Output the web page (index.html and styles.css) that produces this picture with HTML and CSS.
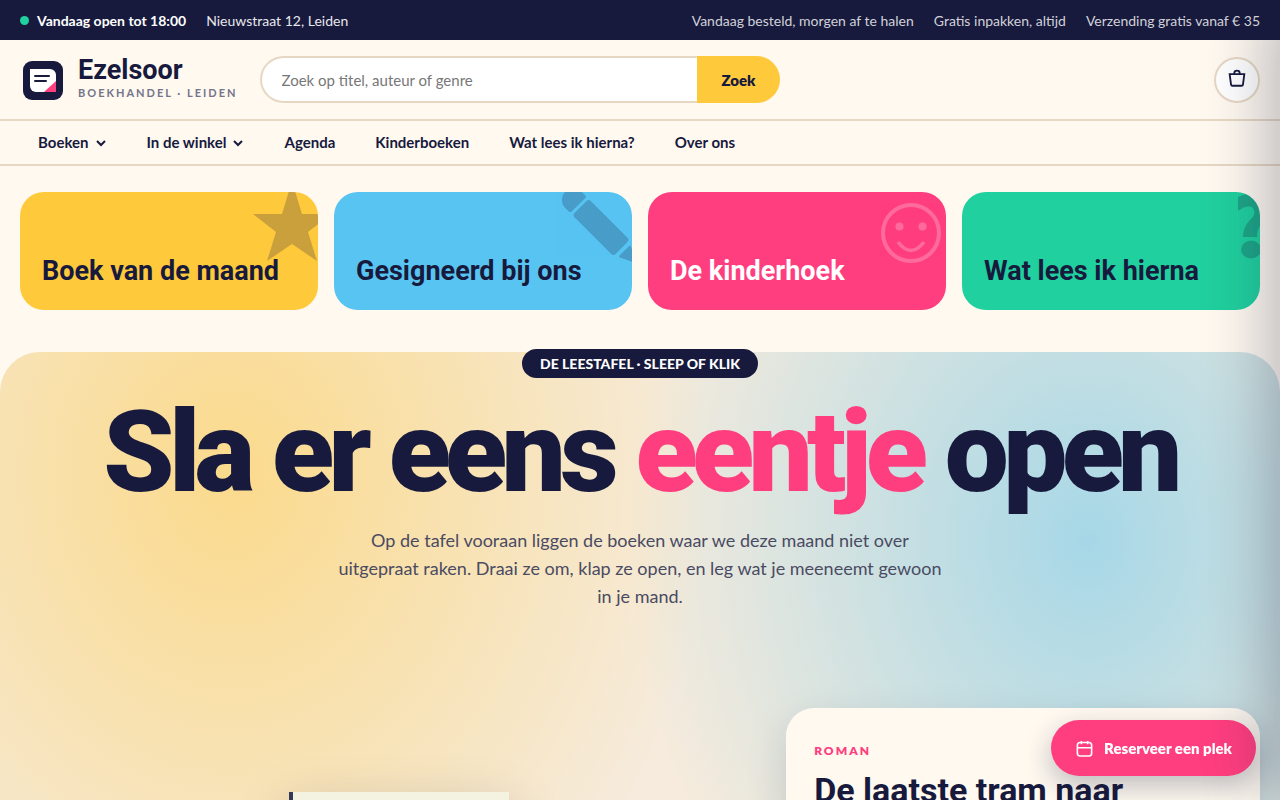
FILE: index.html
```
<!DOCTYPE html>
<html lang="nl">
<head>
<meta charset="UTF-8" />
<meta name="viewport" content="width=device-width, initial-scale=1" />
<title>Ezelsoor – Boekhandel in Leiden</title>
<link rel="stylesheet" href="styles.css">
</head>
<body>
  <div class="topbar">
    <div class="topbar-group">
      <strong class="open-now"><span class="dot"></span>Vandaag open tot 18:00</strong>
      <span>Nieuwstraat 12, Leiden</span>
    </div>
    <div class="topbar-group usps">
      <span>Vandaag besteld, morgen af te halen</span>
      <span>Gratis inpakken, altijd</span>
      <span>Verzending gratis vanaf € 35</span>
    </div>
  </div>

  <header class="header">
    <a class="brand" href="#">
      <svg class="brand-mark" viewBox="0 0 46 46" aria-hidden="true">
        <rect x="3" y="4" width="40" height="39" rx="9" fill="#171a3d"/>
        <path d="M10 12h20a6 6 0 0 1 6 6v17H16a6 6 0 0 1-6-6z" fill="#fff"/>
        <path d="M36 24v11H24z" fill="#ff3e7f"/>
        <path d="M15 19h14M15 24h11" stroke="#171a3d" stroke-width="2" stroke-linecap="round"/>
      </svg>
      <span class="brand-text">
        <span class="brand-name">Ezelsoor</span>
        <span class="brand-sub">Boekhandel · Leiden</span>
      </span>
    </a>
    <form class="search" role="search">
      <input type="search" placeholder="Zoek op titel, auteur of genre" aria-label="Zoek op titel, auteur of genre" />
      <button type="submit">Zoek</button>
    </form>
    <button class="cart" type="button" aria-label="Winkelmand">
      <svg viewBox="0 0 24 24" aria-hidden="true"><path d="M4 5.500h16l-1.500 11.500a1.500 1.500 0 0 1-1.500 1.300H7A1.500 1.500 0 0 1 5.500 17zM9 5.500V4.500a3 2.800 0 0 1 6 0v1"/></svg>
    </button>
  </header>

  <nav class="nav" aria-label="Hoofdmenu">
    <a href="#">Boeken <svg viewBox="0 0 12 12" aria-hidden="true"><path d="M2 4l4 4 4-4"/></svg></a>
    <a href="#">In de winkel <svg viewBox="0 0 12 12" aria-hidden="true"><path d="M2 4l4 4 4-4"/></svg></a>
    <a href="#">Agenda</a>
    <a href="#">Kinderboeken</a>
    <a href="#">Wat lees ik hierna?</a>
    <a href="#">Over ons</a>
  </nav>

  <main>
    <div class="tiles">
      <a class="tile yellow" href="#">
        <svg class="tile-art" viewBox="0 0 80 80" aria-hidden="true"><path d="M54 -11L64 22H93L70 40L79 69L54 52L29 69L38 40L15 22H44z"/></svg>
        <span>Boek van de maand</span>
      </a>
      <a class="tile blue" href="#">
        <svg class="tile-art" viewBox="0 0 80 80" aria-hidden="true">
          <g transform="translate(49 35.500) rotate(45)">
            <path d="M-34-11.500q2 0 2 2v19q0 2-2 2h-5a11.500 11.500 0 0 1 0-23z"/>
            <rect x="-29" y="-11.500" width="58" height="23" rx="3"/>
            <path d="M34-8l13 6q2 2 0 4l-13 6q-1 0-1-2V-6q0-2 1-2z"/>
          </g>
        </svg>
        <span>Gesigneerd bij ons</span>
      </a>
      <a class="tile pink" href="#">
        <svg class="tile-art" viewBox="0 0 80 80" aria-hidden="true">
          <circle cx="45" cy="41" r="28" fill="none" stroke="currentColor" stroke-width="4"/>
          <circle cx="33.500" cy="34.500" r="4"/><circle cx="56.500" cy="34.500" r="4"/>
          <path d="M32 50q13 17 26 0" fill="none" stroke="currentColor" stroke-width="3.500"/>
        </svg>
        <span>De kinderhoek</span>
      </a>
      <a class="tile green" href="#">
        <svg class="tile-art" viewBox="0 0 80 80" aria-hidden="true">
          <path d="M58 5Q66 1 80 0V34Q77 38 77 45H63Q63 35 70 28Q77 22 73 16Q68 12 58 19z"/>
          <ellipse cx="71" cy="57.500" rx="10" ry="9"/>
        </svg>
        <span>Wat lees ik hierna</span>
      </a>
    </div>

    <section class="hero">
      <p class="hero-badge">De leestafel · sleep of klik</p>
      <h1>Sla er eens <em>eentje</em> open</h1>
      <p class="hero-intro">Op de tafel vooraan liggen de boeken waar we deze maand niet over uitgepraat raken. Draai ze om, klap ze open, en leg wat je meeneemt gewoon in je mand.</p>
      <div class="table-stage">
        <div class="book"></div>
        <article class="book-card">
          <p class="genre">Roman</p>
          <h2>De laatste tram naar</h2>
        </article>
      </div>
    </section>
  </main>

  <button class="reserve" type="button">
    <svg viewBox="0 0 24 24" aria-hidden="true"><rect x="3" y="4.500" width="18" height="17" rx="3.500"/><path d="M3 11h18M8 2.500v4M16 2.500v4"/></svg>
    Reserveer een plek
  </button>

  <aside class="drawer" aria-hidden="true"></aside>
</body>
</html>
```
FILE: styles.css
```
:root {
  --ink: #171a3d;
  --paper: #fff9f0;
  --line: #e6d8c3;
  --yellow: #ffc93c;
  --blue: #58c4f2;
  --pink: #ff3e7f;
  --green: #20d09e;
  --body: Lato, sans-serif;
  --display: Roboto, sans-serif;
}

* {
  box-sizing: border-box;
}

body {
  margin: 0;
  background: var(--paper);
  color: var(--ink);
  font-family: var(--body);
  font-size: 15px;
  overflow-x: hidden;
}

a {
  color: inherit;
  text-decoration: none;
}

button,
input {
  font-family: inherit;
  color: inherit;
}

/* top bar */
.topbar {
  position: relative;
  z-index: 30;
  display: flex;
  justify-content: space-between;
  align-items: center;
  min-height: 40px;
  padding: 0 20px;
  background: var(--ink);
  color: #e8e8ec;
  font-size: 14px;
}

.topbar-group {
  display: flex;
  gap: 20px;
}

.open-now {
  display: flex;
  align-items: center;
  gap: 8px;
  color: #fff;
}

.dot {
  width: 9px;
  height: 9px;
  border-radius: 50%;
  background: var(--green);
}

.usps {
  color: #d1d1d8;
}

/* header */
.header {
  display: flex;
  align-items: center;
  gap: 22px;
  padding: 16px 20px;
}

.brand {
  display: flex;
  align-items: center;
  gap: 12px;
}

.brand-mark {
  width: 46px;
  height: 46px;
}

.brand-text {
  display: flex;
  flex-direction: column;
}

.brand-name {
  font-family: var(--display);
  font-size: 27px;
  line-height: 26px;
  font-weight: 700;
}

.brand-sub {
  color: #74748a;
  font-size: 11px;
  line-height: 20px;
  font-weight: 700;
  letter-spacing: 2px;
  text-transform: uppercase;
}

.search {
  display: flex;
  width: 520px;
  height: 47px;
}

.search input {
  flex: 1;
  min-width: 0;
  padding: 0 20px;
  border: 2px solid var(--line);
  border-right: 0;
  border-radius: 24px 0 0 24px;
  background: #fff;
  font-size: 15px;
}

.search input::placeholder {
  color: #777;
}

.search button {
  padding: 0 24px;
  border: 0;
  border-radius: 0 24px 24px 0;
  background: var(--yellow);
  font-size: 15px;
  font-weight: 800;
}

.cart {
  display: grid;
  place-items: center;
  width: 46px;
  height: 46px;
  margin-left: auto;
  padding: 0;
  border: 2px solid var(--line);
  border-radius: 50%;
  background: #fff;
}

.cart svg {
  width: 22px;
  height: 22px;
  fill: none;
  stroke: currentColor;
  stroke-width: 2;
}

/* navigation */
.nav {
  display: flex;
  gap: 40px;
  padding: 0 38px;
  border-top: 2px solid var(--line);
  border-bottom: 2px solid var(--line);
}

.nav a {
  display: flex;
  align-items: center;
  gap: 6px;
  font-size: 15px;
  line-height: 43px;
  font-weight: 700;
}

.nav svg {
  width: 12px;
  height: 12px;
  fill: none;
  stroke: currentColor;
  stroke-width: 2;
}

/* tiles */
.tiles {
  display: grid;
  grid-template-columns: repeat(4, 1fr);
  gap: 16px;
  padding: 26px 20px 42px;
}

.tile {
  position: relative;
  display: flex;
  align-items: flex-end;
  min-height: 118px;
  padding: 22px;
  border-radius: 24px;
  overflow: hidden;
  font-family: var(--display);
  font-size: 27px;
  line-height: 34px;
  font-weight: 700;
}

.tile-art {
  position: absolute;
  top: 0;
  right: 0;
  width: 80px;
  height: 80px;
  fill: currentColor;
  opacity: 0.23;
}

.yellow { background: var(--yellow); }
.blue { background: var(--blue); }
.green { background: var(--green); }

.pink {
  background: var(--pink);
  color: #fff;
}

/* hero */
.hero {
  display: flex;
  flex-direction: column;
  align-items: center;
  padding: 0 20px 60px;
  border-radius: 40px 40px 0 0;
  background:
    radial-gradient(480px 580px at 18% 15%, rgba(255, 201, 60, 0.5), transparent),
    radial-gradient(460px 540px at 85% 23%, rgba(88, 196, 242, 0.5), transparent),
    #f6ebdc;
}

.hero-badge {
  margin: -3px 0 0;
  padding: 0 18px;
  border-radius: 15px;
  background: var(--ink);
  color: #fff;
  font-size: 14px;
  line-height: 29px;
  font-weight: 900;
  text-transform: uppercase;
}

h1 {
  margin: 16px 0 0;
  font-family: var(--display);
  font-size: 114px;
  line-height: 116px;
  font-weight: 900;
  letter-spacing: -0.05em;
  text-align: center;
}

h1 em {
  color: var(--pink);
  font-style: normal;
}

.hero-intro {
  max-width: 616px;
  margin: 16px 0 0;
  color: #4a4b62;
  font-size: 18px;
  line-height: 28px;
  text-align: center;
}

.table-stage {
  display: grid;
  grid-template-columns: 1.6fr 1fr;
  gap: 8px;
  width: 100%;
  margin-top: 98px;
}

.book {
  justify-self: center;
  width: 220px;
  height: 320px;
  margin-top: 84px;
  border-left: 4px solid #37375a;
  background: #f4f3e1;
  box-shadow: 0 20px 50px rgba(23, 26, 61, 0.25);
}

.book-card {
  padding: 28px;
  border-radius: 28px;
  background: var(--paper);
  box-shadow: 0 16px 40px rgba(23, 26, 61, 0.15);
}

.genre {
  margin: 6px 0 12px;
  color: var(--pink);
  font-size: 12px;
  line-height: 18px;
  font-weight: 800;
  letter-spacing: 2px;
  text-transform: uppercase;
}

.book-card h2 {
  margin: 0;
  font-family: var(--display);
  font-size: 34px;
  line-height: 36px;
  font-weight: 700;
}

/* floating reserve button */
.reserve {
  position: fixed;
  right: 24px;
  bottom: 24px;
  display: flex;
  align-items: center;
  gap: 10px;
  height: 56px;
  padding: 0 24px;
  border: 0;
  border-radius: 28px;
  background: var(--pink);
  color: #fff;
  font-size: 15px;
  font-weight: 800;
  box-shadow: 0 10px 28px rgba(23, 26, 61, 0.28);
}

.reserve svg {
  width: 19px;
  height: 19px;
  fill: none;
  stroke: currentColor;
  stroke-width: 2;
}

/* cart drawer, closed: only its shadow reaches the page */
.drawer {
  position: fixed;
  top: 0;
  bottom: 0;
  left: 100%;
  width: 400px;
  background: var(--paper);
  box-shadow: -12px 0 60px rgba(23, 26, 61, 0.3);
}
```
